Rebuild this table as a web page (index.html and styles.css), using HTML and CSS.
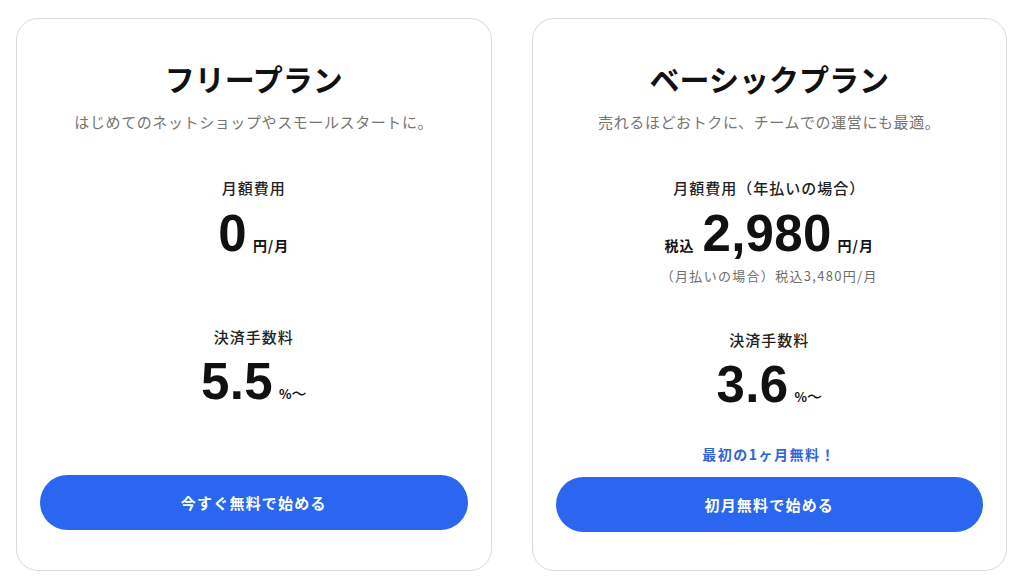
FILE: index.html
```html
<!DOCTYPE html>
<html lang="ja">
<head>
<meta charset="utf-8">
<title>料金プラン</title>
<link rel="stylesheet" href="styles.css">
</head>
<body>
<main class="plans">
  <section class="card">
    <h2 class="card-title">フリープラン</h2>
    <p class="card-sub">はじめてのネットショップやスモールスタートに。</p>
    <div class="price">
      <div class="label">月額費用</div>
      <div class="value"><span class="num">0</span><span class="unit">円/月</span></div>
    </div>
    <div class="fee">
      <div class="label">決済手数料</div>
      <div class="value"><span class="num">5.5</span><span class="unit pct">%<span class="tilde">～</span></span></div>
    </div>
    <div class="action">
      <a class="btn" href="#">今すぐ無料で始める</a>
    </div>
  </section>
  <section class="card card--basic">
    <h2 class="card-title">ベーシックプラン</h2>
    <p class="card-sub">売れるほどおトクに、チームでの運営にも最適。</p>
    <div class="price">
      <div class="label">月額費用（年払いの場合）</div>
      <div class="value"><span class="pre">税込</span><span class="num">2,980</span><span class="unit">円/月</span></div>
      <div class="note">（月払いの場合）税込3,480円/月</div>
    </div>
    <div class="fee">
      <div class="label">決済手数料</div>
      <div class="value"><span class="num">3.6</span><span class="unit pct">%<span class="tilde">～</span></span></div>
    </div>
    <div class="action">
      <p class="promo">最初の1ヶ月無料！</p>
      <a class="btn" href="#">初月無料で始める</a>
    </div>
  </section>
</main>
</body>
</html>
```

FILE: styles.css
```css
* { box-sizing: border-box; }
html, body { margin: 0; padding: 0; background: #fff; }
body {
  font-family: "Noto Sans CJK JP", "Noto Sans", sans-serif;
  color: #1a1a1a;
}
.plans {
  display: flex;
  gap: 40px;
  padding: 18px 17px 10px 16px;
}
.card {
  flex: 1;
  height: 553px;
  border: 1px solid #dadada;
  border-radius: 22px;
  padding: 38px 23px 40px;
  display: flex;
  flex-direction: column;
  align-items: center;
  text-align: center;
}
.card--basic { padding-bottom: 38px; }
.card-title {
  margin: 0;
  font-size: 30px;
  line-height: 42px;
  font-weight: 700;
  color: #111;
}
.card-sub {
  margin: 11px 0 0;
  font-size: 15px;
  line-height: 24px;
  letter-spacing: 0.6px;
  color: #77756f;
}
.price {
  margin-top: 42px;
  min-height: 107px;
}
.fee { margin-top: 42px; }
.label {
  font-size: 15px;
  line-height: 24px;
  font-weight: 500;
  letter-spacing: 1px;
  color: #222;
}
.value {
  margin-top: 4px;
  height: 60px;
  line-height: 60px;
  display: flex;
  align-items: baseline;
  justify-content: center;
}
.fee .value { margin-top: 3px; }
.num {
  font-family: "Liberation Sans", Arial, sans-serif;
  font-size: 51px;
  font-weight: 700;
  letter-spacing: 0.3px;
  color: #111;
}
.unit, .pre {
  font-size: 14px;
  font-weight: 700;
  letter-spacing: 1px;
  color: #111;
}
.unit { margin-left: 6px; }
.pre { margin-right: 8px; }
.pct { font-size: 13px; letter-spacing: 0; }
.tilde { font-weight: 500; font-size: 15px; }
.note {
  margin-top: 2px;
  font-size: 13px;
  line-height: 20px;
  letter-spacing: 1.3px;
  color: #6f6d68;
}
.action {
  margin-top: auto;
  width: 100%;
}
.promo {
  margin: 0 0 12px;
  font-size: 14px;
  line-height: 22px;
  font-weight: 700;
  letter-spacing: 1.5px;
  color: #2f66e0;
}
.btn {
  display: flex;
  align-items: center;
  justify-content: center;
  width: 100%;
  height: 55px;
  border-radius: 28px;
  background: #2a66ef;
  color: #fff;
  text-decoration: none;
  font-size: 15px;
  font-weight: 700;
  letter-spacing: 1.2px;
}
```
